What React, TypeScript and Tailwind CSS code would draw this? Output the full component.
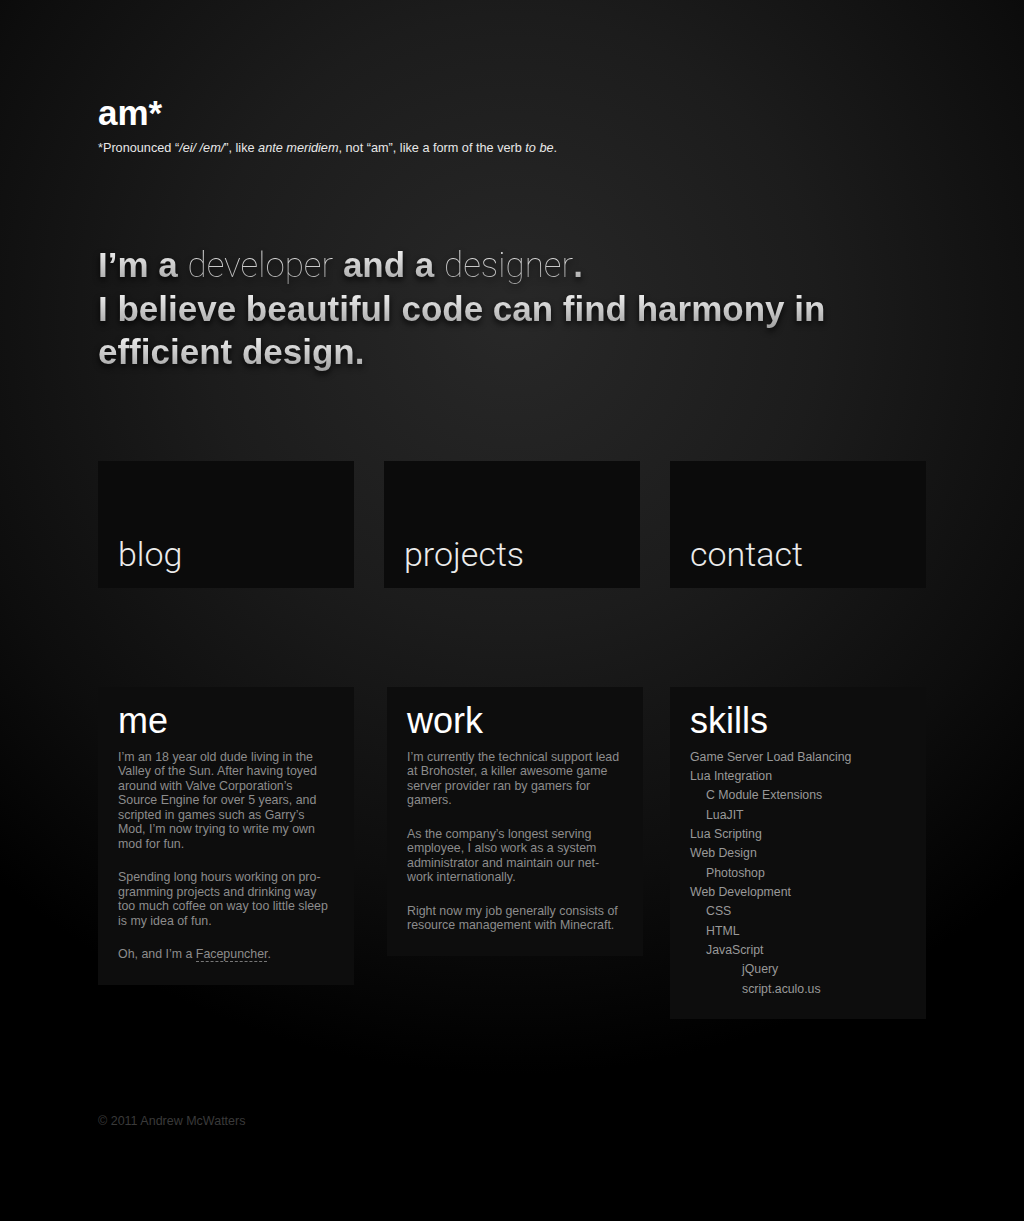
const sans = "font-['Liberation_Sans',Arial,sans-serif]";
const light = "font-['Roboto',sans-serif]";

const navCards = ["blog", "projects", "contact"];

const skills: { name: string; level: 0 | 1 | 2 }[] = [
    { name: "Game Server Load Balancing", level: 0 },
    { name: "Lua Integration", level: 0 },
    { name: "C Module Extensions", level: 1 },
    { name: "LuaJIT", level: 1 },
    { name: "Lua Scripting", level: 0 },
    { name: "Web Design", level: 0 },
    { name: "Photoshop", level: 1 },
    { name: "Web Development", level: 0 },
    { name: "CSS", level: 1 },
    { name: "HTML", level: 1 },
    { name: "JavaScript", level: 1 },
    { name: "jQuery", level: 2 },
    { name: "script.aculo.us", level: 2 },
];

const indent = {
    0: "pl-0",
    1: "pl-[16px]",
    2: "pl-[52px]",
};

function InfoCard({ title, className = "", children }: { title: string; className?: string; children: React.ReactNode }) {
    return (
        <div className={`bg-[#0d0d0d] pl-5 pt-[16px] ${className}`}>
            <h2 className={`${sans} text-[36px] leading-none text-white`}>{title}</h2>
            <div className="mt-[11px]">{children}</div>
        </div>
    );
}

function Para({ children, last }: { children: React.ReactNode; last?: boolean }) {
    return <p className={`text-[12.4px] leading-[14.5px] text-[#8c8c8c] ${last ? "" : "mb-[19px]"}`}>{children}</p>;
}

export default function App() {
    const bold = "bg-linear-to-b from-white to-[#9c9c9c] bg-clip-text text-transparent";
    return (
        <div
            className={`${sans} min-h-[1221px] bg-[radial-gradient(ellipse_75%_62%_at_50%_26%,#282828_0%,#1c1c1c_40%,#0d0d0d_75%,#000_100%)]`}
        >
            <div className="mx-auto w-[828px] pt-[95px] pb-[90px]">
                <header>
                    <h1 className="text-[35px] leading-none font-bold text-white">am*</h1>
                    <p className="mt-[12px] text-[12.7px] leading-none text-[#e8e8e8]">
                        *Pronounced “<i>/ei/ /em/</i>”, like <i>ante meridiem</i>, not “am”, like a form of the verb <i>to be</i>.
                    </p>
                </header>

                <div className="mt-[88px] text-[35px] leading-[43px] font-bold drop-shadow-[0_3px_3px_rgba(0,0,0,0.85)]">
                    <div className={bold}>
                        I’m a <span className={`${light} font-thin`}>developer</span> and a{" "}
                        <span className={`${light} font-thin`}>designer</span>.
                    </div>
                    <div className={bold}>I believe beautiful code can find harmony in</div>
                    <div className={bold}>efficient design.</div>
                </div>

                <nav className="mt-[88px] grid grid-cols-3 gap-[30px]">
                    {navCards.map((label) => (
                        <a key={label} className="block h-[127px] bg-[#0b0b0b] px-5 pt-[76px]">
                            <span className={`${light} text-[34px] leading-none font-light text-[#ececec]`}>{label}</span>
                        </a>
                    ))}
                </nav>

                <div className="mt-[99px] grid grid-cols-3 items-start gap-[30px]">
                    <InfoCard title="me" className="pr-5 pb-[23px]">
                        <Para>
                            I’m an 18 year old dude living in the Valley of the Sun. After having toyed around with Valve
                            Corporation’s Source Engine for over 5 years, and scripted in games such as Garry’s Mod, I’m
                            now trying to write my own mod for fun.
                        </Para>
                        <Para>
                            Spending long hours working on pro{"\u00AD"}gramming projects and drinking way too much coffee on
                            way too little sleep is my idea of fun.
                        </Para>
                        <Para last>
                            Oh, and I’m a <span className="border-b border-dashed border-[#777]">Facepuncher</span>.
                        </Para>
                    </InfoCard>
                    <InfoCard title="work" className="ml-[3px] -mr-[3px] pr-[22px] pb-[23px]">
                        <Para>
                            I’m currently the technical support lead at Brohoster, a killer awesome game server provider
                            ran by gamers for gamers.
                        </Para>
                        <Para>
                            As the company’s longest serving employee, I also work as a system administrator and maintain
                            our net{"\u00AD"}work internationally.
                        </Para>
                        <Para last>Right now my job generally consists of resource management with Minecraft.</Para>
                    </InfoCard>
                    <InfoCard title="skills" className="pr-5 pb-[20px]">
                        <ul className="-mt-[2px] text-[12.3px] leading-[19.33px] text-[#999]">
                            {skills.map((s) => (
                                <li key={s.name} className={indent[s.level]}>
                                    {s.name}
                                </li>
                            ))}
                        </ul>
                    </InfoCard>
                </div>

                <footer className="mt-[96px] text-[12.5px] leading-none text-[#3a3a3a]">© 2011 Andrew McWatters</footer>
            </div>
        </div>
    );
}
